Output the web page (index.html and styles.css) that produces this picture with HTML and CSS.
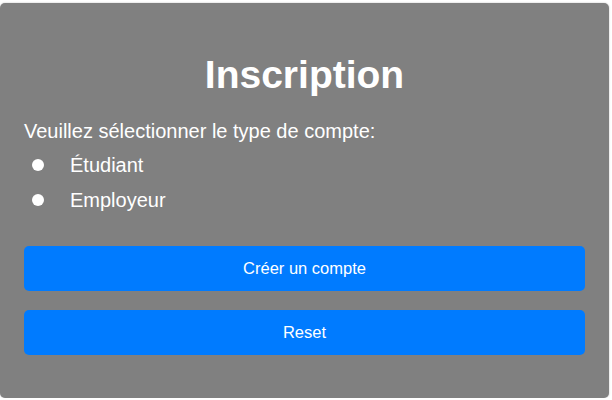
FILE: index.html
```html
<!DOCTYPE html>
<html lang="fr">
<head>
<meta charset="utf-8">
<title>Inscription</title>
<link rel="stylesheet" href="styles.css">
</head>
<body>
<form class="card">
  <h1 class="title">Inscription</h1>
  <p class="prompt">Veuillez sélectionner le type de compte:</p>
  <div class="options">
    <label class="option"><input type="radio" name="type" class="radio"><span>Étudiant</span></label>
    <label class="option"><input type="radio" name="type" class="radio"><span>Employeur</span></label>
  </div>
  <div class="actions">
    <button type="submit" class="btn">Créer un compte</button>
    <button type="reset" class="btn">Reset</button>
  </div>
</form>
</body>
</html>
```

FILE: styles.css
```css
html, body {
  margin: 0;
  padding: 0;
  background: #ffffff;
}
body {
  font-family: "Liberation Sans", Arial, sans-serif;
  color: #ffffff;
}
.card {
  box-sizing: border-box;
  width: 609px;
  height: 395px;
  margin-top: 3px;
  padding: 49px 24px 0 24px;
  background: #808080;
  border-radius: 5px;
  box-shadow: 0 0 2px rgba(0,0,0,0.25);
  display: flex;
  flex-direction: column;
}
.title {
  margin: 0;
  font-size: 39px;
  line-height: 46px;
  font-weight: bold;
  text-align: center;
}
.prompt {
  margin: 22px 0 0 0;
  font-size: 20px;
  line-height: 23px;
}
.options {
  display: flex;
  flex-direction: column;
  gap: 12px;
  margin-top: 11px;
}
.option {
  display: flex;
  align-items: flex-start;
  gap: 26px;
  padding-left: 8px;
  font-size: 20px;
  line-height: 23px;
}
.radio {
  appearance: none;
  -webkit-appearance: none;
  margin: 5px 0 0 0;
  width: 12px;
  height: 12px;
  border-radius: 50%;
  background: #ffffff;
  border: 0;
}
.actions {
  display: flex;
  flex-direction: column;
  gap: 19px;
  margin-top: 34px;
}
.btn {
  height: 45px;
  border: 0;
  border-radius: 5px;
  background: #007bff;
  color: #ffffff;
  font-family: "Liberation Sans", Arial, sans-serif;
  font-size: 16.5px;
}
```
